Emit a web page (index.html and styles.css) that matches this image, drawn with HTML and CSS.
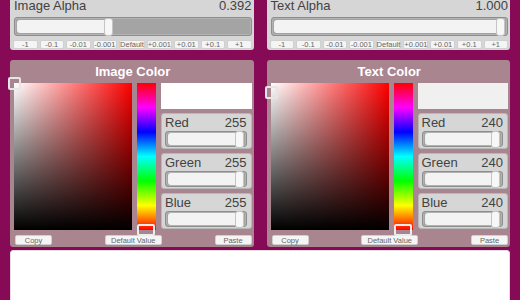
FILE: index.html
```html
<!DOCTYPE html>
<html lang="en">

<head>
    <meta charset="UTF-8">
    <meta name="viewport" content="width=device-width, initial-scale=1.0">
    <title>Color Settings</title>
    <link rel="stylesheet" href="styles.css">
</head>

<body>
    <div class="editor">
        <!-- Alpha sliders -->
        <div class="row alpha-row">
            <section class="alpha-panel">
                <div class="alpha-head"><span>Image Alpha</span><span>0.392</span></div>
                <div class="slider big">
                    <div class="fill" style="width: 39.2%;"></div>
                    <div class="knob"></div>
                </div>
                <div class="steps">
                    <button>-1</button><button>-0.1</button><button>-0.01</button><button>-0.001</button><button>Default</button><button>+0.001</button><button>+0.01</button><button>+0.1</button><button>+1</button>
                </div>
            </section>
            <section class="alpha-panel">
                <div class="alpha-head"><span>Text Alpha</span><span>1.000</span></div>
                <div class="slider big">
                    <div class="fill" style="width: 100%;"></div>
                    <div class="knob"></div>
                </div>
                <div class="steps">
                    <button>-1</button><button>-0.1</button><button>-0.01</button><button>-0.001</button><button>Default</button><button>+0.001</button><button>+0.01</button><button>+0.1</button><button>+1</button>
                </div>
            </section>
        </div>

        <!-- Color pickers -->
        <div class="row color-row">
            <section class="color-panel">
                <h2>Image Color</h2>
                <div class="picker">
                    <div class="sv"><span class="sv-handle" style="top: 0%;"></span></div>
                    <div class="hue"><span class="hue-handle"></span></div>
                    <div class="side">
                        <div class="swatch" style="background: #ffffff;"></div>
                        <div class="channel">
                            <div class="channel-head"><span>Red</span><span>255</span></div>
                            <div class="slider small"><div class="fill" style="width: 100%;"></div><div class="knob"></div></div>
                        </div>
                        <div class="channel">
                            <div class="channel-head"><span>Green</span><span>255</span></div>
                            <div class="slider small"><div class="fill" style="width: 100%;"></div><div class="knob"></div></div>
                        </div>
                        <div class="channel">
                            <div class="channel-head"><span>Blue</span><span>255</span></div>
                            <div class="slider small"><div class="fill" style="width: 100%;"></div><div class="knob"></div></div>
                        </div>
                    </div>
                </div>
                <div class="actions">
                    <button>Copy</button><button>Default Value</button><button>Paste</button>
                </div>
            </section>
            <section class="color-panel">
                <h2>Text Color</h2>
                <div class="picker">
                    <div class="sv"><span class="sv-handle" style="top: 6%;"></span></div>
                    <div class="hue"><span class="hue-handle"></span></div>
                    <div class="side">
                        <div class="swatch" style="background: #f0f0f0;"></div>
                        <div class="channel">
                            <div class="channel-head"><span>Red</span><span>240</span></div>
                            <div class="slider small"><div class="fill" style="width: 94%;"></div><div class="knob"></div></div>
                        </div>
                        <div class="channel">
                            <div class="channel-head"><span>Green</span><span>240</span></div>
                            <div class="slider small"><div class="fill" style="width: 94%;"></div><div class="knob"></div></div>
                        </div>
                        <div class="channel">
                            <div class="channel-head"><span>Blue</span><span>240</span></div>
                            <div class="slider small"><div class="fill" style="width: 94%;"></div><div class="knob"></div></div>
                        </div>
                    </div>
                </div>
                <div class="actions">
                    <button>Copy</button><button>Default Value</button><button>Paste</button>
                </div>
            </section>
        </div>

        <div class="text-box"></div>
    </div>
</body>

</html>
```

FILE: styles.css
```css
body {
    margin: 0;
    font-family: 'Liberation Sans', Arial, sans-serif;
    background: #870a56;
    color: #424242;
    overflow: hidden;
}

.editor {
    padding: 0 10px;
    margin-top: -5px;
}

.row {
    display: grid;
    grid-template-columns: 1fr 1fr;
    gap: 13px;
}

.alpha-row {
    margin-bottom: 10px;
}

.color-row {
    margin-bottom: 3px;
}

/* Alpha panels */

.alpha-panel {
    background: #d6d6d6;
    border-radius: 3px;
    padding: 3px 2px 1px 4px;
}

.alpha-head {
    display: flex;
    justify-content: space-between;
    font-size: 13px;
    line-height: 15px;
}

.slider {
    display: flex;
    align-items: center;
    background: #a4a4a4;
    border: 1px solid #8e8e8e;
    border-radius: 3px;
    box-shadow: inset 0 0 0 1px #b2b2b2;
}

.slider .fill {
    flex-shrink: 1;
    min-width: 0;
    background: #f3f3f3;
    border-radius: 3px 0 0 3px;
}

.slider .knob {
    flex-shrink: 0;
    background: #f7f7f7;
    border: 1px solid #c4c4c4;
    border-radius: 3px;
}

.slider.big {
    height: 17px;
    margin-top: 4px;
    padding: 0 2px;
}

.slider.big .fill {
    height: 13px;
}

.slider.big .knob {
    width: 7px;
    height: 16px;
    margin-left: -4px;
}

.steps {
    display: flex;
    gap: 2px;
    margin: 4px 0 0 -1px;
}

.steps button,
.actions button {
    font-family: inherit;
    font-size: 7.5px;
    color: #666;
    background: #f5f5f5;
    border: 1px solid #d0d0d0;
    border-radius: 2px;
    padding: 0;
    height: 9px;
    line-height: 7px;
}

.steps button {
    flex: 1;
}

/* Color panels */

.color-panel {
    background: #a98590;
    border-radius: 3px;
    padding: 4px 2px 2px 4px;
}

.color-panel h2 {
    margin: 0 0 4px;
    text-align: center;
    font-size: 13px;
    line-height: 15px;
    color: #fff;
}

.picker {
    display: flex;
    gap: 5px;
    height: 147px;
}

.sv {
    position: relative;
    width: 118px;
    flex-shrink: 0;
    background:
        linear-gradient(to top, #000, rgba(0, 0, 0, 0)),
        linear-gradient(to right, #fff, #f00);
}

.sv-handle {
    position: absolute;
    left: -6px;
    width: 9px;
    height: 9px;
    margin-top: -6px;
    border: 2px solid #e6e6e6;
    border-radius: 2px;
}

.hue {
    position: relative;
    width: 19px;
    flex-shrink: 0;
    background: linear-gradient(to bottom, #f00, #f0f, #00f, #0ff, #0f0, #ff0, #f00);
}

.hue-handle {
    position: absolute;
    left: 0;
    right: 1px;
    bottom: -6px;
    height: 8px;
    border: 2px solid #ececec;
    border-radius: 2px;
}

.side {
    flex: 1;
    display: flex;
    flex-direction: column;
    gap: 4px;
}

.swatch {
    height: 26px;
}

.channel {
    height: 34px;
    background: #d6d6d6;
    border: 1px solid #b8b8b8;
    border-radius: 3px;
    padding: 0 4px 0 3px;
    display: flex;
    flex-direction: column;
}

.channel-head {
    display: flex;
    justify-content: space-between;
    font-size: 13px;
    line-height: 15px;
    margin-top: 1px;
}

.slider.small {
    height: 14px;
    margin-top: 1px;
    padding: 0 2px;
}

.slider.small .fill {
    height: 12px;
}

.slider.small .knob {
    width: 7px;
    height: 15px;
    margin-left: -4px;
}

.actions {
    display: flex;
    justify-content: space-between;
    margin-top: 5px;
    padding-left: 1px;
}

.actions button {
    height: 10px;
    width: 37px;
}

.actions button:nth-child(2) {
    width: 57px;
}

.text-box {
    height: 60px;
    background: #fff;
    border: 1px solid #e4dce0;
    border-radius: 3px;
}
```
